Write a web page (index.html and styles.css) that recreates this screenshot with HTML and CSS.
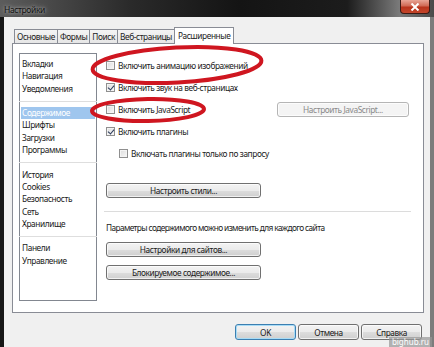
FILE: index.html
```html
<!DOCTYPE html>
<html>
<head>
    <meta charset="utf-8">
    <title>Настройки</title>
    <link rel="stylesheet" href="styles.css">
</head>
<body>
    <div class="window">
        <div class="titlebar">
            <span class="title">Настройки</span>
            <span class="close">
                <svg width="10" height="8" viewBox="0 0 10 8"><path d="M1.5 0.5 L8.5 7.5 M8.5 0.5 L1.5 7.5" stroke="#fff" stroke-width="2"/></svg>
            </span>
        </div>
        <div class="frame">
            <div class="client">
                <div class="tabs">
                    <div class="tab">Основные</div>
                    <div class="tab">Формы</div>
                    <div class="tab">Поиск</div>
                    <div class="tab">Веб-страницы</div>
                    <div class="tab active">Расширенные</div>
                </div>
                <div class="panel">
                    <ul class="nav">
                        <li>Вкладки</li>
                        <li>Навигация</li>
                        <li>Уведомления</li>
                        <li class="sep"></li>
                        <li class="selected">Содержимое</li>
                        <li>Шрифты</li>
                        <li>Загрузки</li>
                        <li>Программы</li>
                        <li class="sep"></li>
                        <li>История</li>
                        <li>Cookies</li>
                        <li>Безопасность</li>
                        <li>Сеть</li>
                        <li>Хранилище</li>
                        <li class="sep"></li>
                        <li>Панели</li>
                        <li>Управление</li>
                    </ul>
                    <div class="content">
                        <div class="row"><span class="cb"></span>Включить анимацию изображений</div>
                        <div class="row"><span class="cb checked"></span>Включить звук на веб-страницах</div>
                        <div class="row">
                            <span class="cb"></span>Включить JavaScript
                            <button class="btn disabled js-btn">Настроить JavaScript...</button>
                        </div>
                        <div class="row"><span class="cb checked"></span>Включить плагины</div>
                        <div class="row sub"><span class="cb"></span>Включать плагины только по запросу</div>
                        <button class="btn wide styles-btn">Настроить стили...</button>
                        <div class="divider"></div>
                        <p class="note">Параметры содержимого можно изменить для каждого сайта</p>
                        <button class="btn wide">Настройки для сайтов...</button>
                        <button class="btn wide">Блокируемое содержимое...</button>
                    </div>
                </div>
                <div class="footer">
                    <button class="btn default">OK</button>
                    <button class="btn">Отмена</button>
                    <button class="btn">Справка</button>
                </div>
            </div>
        </div>

        <!-- red marks drawn over the screenshot -->
        <svg class="marks" width="434" height="347" viewBox="0 0 434 347">
            <ellipse cx="177" cy="65" rx="84.5" ry="17.5" transform="rotate(-3 177 65)" fill="none" stroke="#cf1620" stroke-width="4"/>
            <ellipse cx="148" cy="110" rx="56" ry="11" transform="rotate(-1 148 110)" fill="none" stroke="#cf1620" stroke-width="4"/>
        </svg>
        <div class="watermark">bighub.ru</div>
    </div>
</body>
</html>
```

FILE: styles.css
```css
* { box-sizing: border-box; }
body {
    margin: 0;
    font-family: "Noto Sans", "Open Sans", sans-serif;
    font-size: 8.3px;
    letter-spacing: -0.4px;
    color: #1b1b1b;
    background: #1a1a1a;
}
.window {
    position: relative;
    width: 434px;
    height: 347px;
    overflow: hidden;
    display: flex;
    flex-direction: column;
}
.titlebar {
    height: 17px;
    display: flex;
    align-items: center;
    background: linear-gradient(90deg, #5c5c5c 0%, #2a2a2a 30%, #141414 55%, #1c1c1c 80%, #7a7a7a 92%, #4a4a4a 100%);
}
.title {
    margin-left: 4px;
    margin-top: 2px;
    color: #111;
    font-size: 8.5px;
    text-shadow: 0 0 3px #b8b8b8, 0 0 6px #9a9a9a;
}
.close {
    margin-left: auto;
    margin-right: 4px;
    align-self: flex-start;
    width: 30px;
    height: 14px;
    display: flex;
    align-items: center;
    justify-content: center;
    border: 1px solid #3a1a14;
    border-top: none;
    border-radius: 0 0 4px 4px;
    background: linear-gradient(#e8a596 0%, #d06a55 45%, #b8341c 55%, #c4452a 100%);
}
.frame {
    flex: 1;
    display: flex;
    background: #f0f0f0;
    border-left: 4px solid #161616;
    border-right: 4px solid #7c7c7c;
}
.client {
    flex: 1;
    padding: 10px 6px 0 8px;
    display: flex;
    flex-direction: column;
}
.tabs {
    display: flex;
    align-items: flex-end;
    height: 16px;
    padding-left: 2px;
}
.tab {
    height: 14px;
    padding: 0 2px;
    line-height: 13px;
    border: 1px solid #898c95;
    border-bottom: none;
    margin-right: -1px;
    background: linear-gradient(#f4f4f4, #e6e6e6);
    white-space: nowrap;
}
.tab.active {
    position: relative;
    z-index: 1;
    height: 17px;
    margin-bottom: -1px;
    line-height: 15px;
    padding: 0 3px;
    background: #fff;
}
.panel {
    height: 270px;
    border: 1px solid #898c95;
    background: #fff;
    display: flex;
    padding: 9px 6px 11px 6px;
}
.nav {
    width: 78px;
    margin: 0;
    padding: 4px 1px 0 1px;
    list-style: none;
    border: 1px solid #828790;
}
.nav li {
    height: 12.3px;
    line-height: 12.3px;
    padding-left: 1px;
    white-space: nowrap;
}
.nav li.sep {
    position: relative;
}
.nav li.sep::after {
    content: "";
    position: absolute;
    left: -2px;
    right: -2px;
    top: 6px;
    border-top: 1px solid #dedede;
}
.nav li.selected {
    background: #9fc6ee;
    color: #fff;
}
.content {
    flex: 1;
    margin-left: 9px;
    padding-top: 1px;
    display: flex;
    flex-direction: column;
}
.row {
    height: 22px;
    display: flex;
    align-items: center;
    white-space: nowrap;
}
.row.sub { padding-left: 13px; }
.cb {
    width: 9px;
    height: 9px;
    margin-right: 3px;
    border: 1px solid #8f8f8f;
    background: linear-gradient(135deg, #dcdcdc, #f8f8f8);
    box-shadow: inset 0 0 0 1px #f4f4f4;
    position: relative;
}
.cb.checked::after {
    content: "";
    position: absolute;
    left: 2px;
    top: 0px;
    width: 3px;
    height: 5px;
    border: solid #2a3a5a;
    border-width: 0 1.5px 1.5px 0;
    transform: rotate(40deg);
}
.btn {
    height: 15px;
    padding: 0;
    font-family: inherit;
    font-size: 8.3px;
    letter-spacing: -0.4px;
    color: #1b1b1b;
    border: 1px solid #707070;
    border-radius: 3px;
    background: linear-gradient(#f3f3f3 0%, #ebebeb 50%, #dddddd 51%, #cfcfcf 100%);
    box-shadow: inset 0 0 0 1px rgba(255, 255, 255, 0.7);
}
.btn.disabled {
    color: #8a8a8a;
    border-color: #b5b5b5;
    background: #f4f4f4;
}
.js-btn {
    width: 132px;
    margin-left: auto;
    margin-right: 8px;
}
.wide {
    width: 155px;
    margin-top: 8px;
}
.styles-btn { margin-top: 19px; }
.divider {
    margin: 13px 6px 0 -2px;
    border-top: 1px solid #dcdcdc;
}
.note {
    margin: 10px 0 0 0;
    line-height: 12px;
    letter-spacing: -0.6px;
    white-space: nowrap;
}
.footer {
    display: flex;
    justify-content: flex-end;
    gap: 2px;
    padding: 11px 2px 0 0;
}
.footer .btn {
    width: 61px;
    height: 16px;
}
.btn.default {
    border-color: #3c7fb1;
    box-shadow: inset 0 0 0 1px #a8dcf6;
}
.marks {
    position: absolute;
    left: 0;
    top: 0;
    pointer-events: none;
}
.watermark {
    position: absolute;
    right: 2px;
    bottom: 0;
    padding: 0 3px;
    font-size: 8px;
    letter-spacing: 0;
    line-height: 10px;
    color: #fff;
    background: rgba(150, 150, 150, 0.7);
}
```
